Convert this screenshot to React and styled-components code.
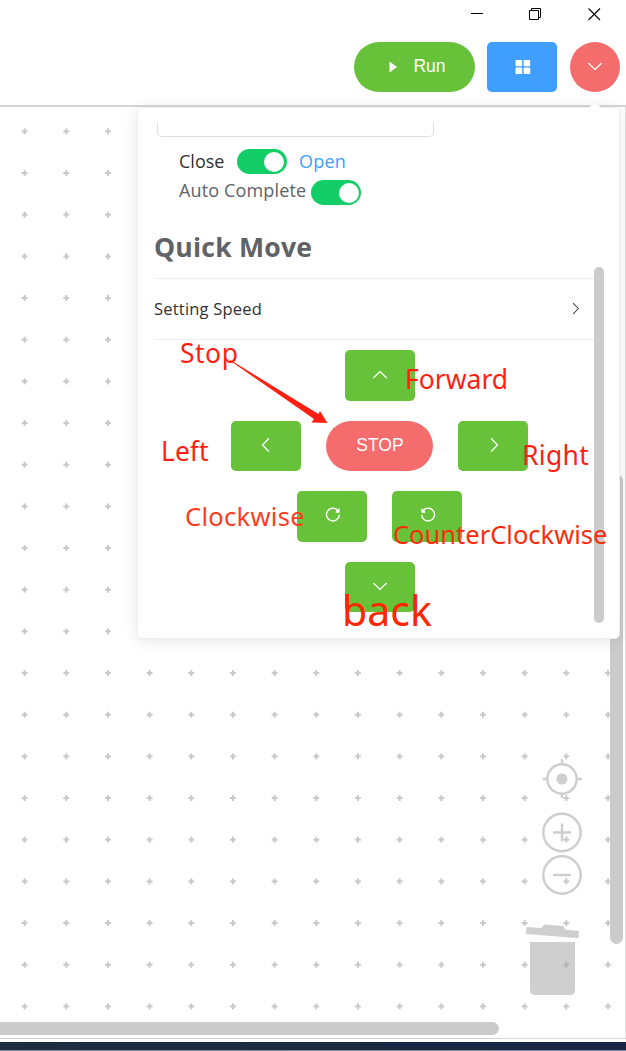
import React from "react";
import styled, { createGlobalStyle } from "styled-components";

const GlobalStyle = createGlobalStyle`
  *, *::before, *::after { box-sizing: border-box; }
  body { margin: 0; background: #fff; overflow: hidden; }
  button { font: inherit; border: 0; padding: 0; margin: 0; }
`;

const humanist = `"Open Sans", "Noto Sans", sans-serif`;
const noteFace = `"Noto Sans", "Open Sans", sans-serif`;

const Window = styled.div`
  position: relative;
  width: 626px;
  height: 1051px;
  display: flex;
  flex-direction: column;
  overflow: hidden;
  background: #fff;
  font-family: ${humanist};
  color: #606266;
`;

const TitleBar = styled.div`
  height: 28px;
  flex: none;
  display: flex;
  justify-content: flex-end;
  align-items: center;
  gap: 44px;
  padding-right: 25px;
  svg { display: block; }
  svg:last-child { margin-left: 1px; }
`;

const Toolbar = styled.header`
  height: 79px;
  flex: none;
  display: flex;
  justify-content: flex-end;
  align-items: flex-start;
  gap: 12px;
  padding: 14px 6px 0 0;
  border-bottom: 2px solid #d6d6d6;
  & > :last-child { margin-left: 1px; }
`;

const colours = { green: "#67c23a", blue: "#409eff", red: "#f56c6c" };

const Button = styled.button`
  display: flex;
  align-items: center;
  justify-content: center;
  gap: ${(p) => p.$gap || 0}px;
  width: ${(p) => p.$w || 70}px;
  height: ${(p) => p.$h || 50}px;
  padding-left: ${(p) => p.$indent || 0}px;
  padding-bottom: ${(p) => p.$lift || 0}px;
  flex: none;
  border-radius: ${(p) => (p.$round ? 25 : 5)}px;
  background: ${(p) => colours[p.$tone || "green"]};
  color: #fff;
  font-family: "Liberation Sans", Arial, sans-serif;
  font-size: 17.5px;
  line-height: 1;
  svg { display: block; flex: none; }
`;

const Workspace = styled.main`
  position: relative;
  height: 932px;
  flex: none;
  border-bottom: 1px solid #d4d4d4;
  border-right: 1px solid #dedede;
`;

const DotGrid = styled.svg`
  display: block;
  width: 625px;
  height: 913px;
`;

const Controls = styled.div`
  position: absolute;
  left: 524px;
  top: 650px;
  display: flex;
  flex-direction: column;
  svg { display: block; }
`;

const HorizontalScroll = styled.div`
  width: 499px;
  height: 13px;
  margin-top: 2px;
  border-radius: 0 7px 7px 0;
  background: #cbcbcb;
`;

const VerticalScroll = styled.div`
  position: absolute;
  left: 610px;
  top: 367px;
  width: 13px;
  height: 470px;
  border-radius: 7px;
  background: #cbcbcb;
`;

const Taskbar = styled.footer`
  flex: none;
  margin-top: 3px;
  height: 9px;
  background: linear-gradient(90deg, #1d2e40, #192745);
  border-bottom: 1px solid #7c8798;
`;

const Popover = styled.section`
  position: absolute;
  left: 137px;
  top: 107px;
  width: 483px;
  height: 532px;
  padding: 15px 16px;
  background: #fff;
  border: 1px solid #ebeef5;
  border-radius: 5px;
  box-shadow: 0 2px 15px rgba(0, 0, 0, 0.1);
`;

const Caret = styled.svg`
  position: absolute;
  right: 17px;
  top: -7px;
`;

const PanelBody = styled.div`
  height: 100%;
  width: 440px;
  display: flex;
  flex-direction: column;
`;

const PanelScroll = styled.div`
  position: absolute;
  left: 456px;
  top: 159px;
  width: 10px;
  height: 356px;
  border-radius: 5px;
  background: #cbcbcb;
`;

const Field = styled.div`
  width: 277px;
  height: 14px;
  flex: none;
  margin-left: 3px;
  border: 1px solid #dcdfe6;
  border-top: 0;
  border-radius: 0 0 5px 5px;
`;

const SwitchRow = styled.div`
  display: flex;
  align-items: center;
  height: 25px;
  flex: none;
  margin: ${(p) => p.$top}px 0 0 25px;
`;

const Caption = styled.span`
  font-size: 18px;
  line-height: 25px;
  white-space: nowrap;
  width: ${(p) => p.$w}px;
  letter-spacing: ${(p) => p.$ls || 0}px;
  color: ${(p) => p.$color || "#606266"};
  margin-top: ${(p) => p.$shift || 0}px;
`;

const Switch = styled.span`
  width: 50px;
  height: 25px;
  flex: none;
  display: flex;
  align-items: center;
  justify-content: flex-end;
  padding-right: ${(p) => p.$inset || 2}px;
  border-radius: 13px;
  background: #13ce66;
  margin-right: 12px;
  &::after {
    content: "";
    width: 20px;
    height: 20px;
    border-radius: 50%;
    background: #fff;
  }
`;

const Heading = styled.h2`
  margin: 23px 0 0;
  height: 50px;
  flex: none;
  font-size: 26.6px;
  letter-spacing: 0.2px;
  line-height: 38px;
  font-weight: 700;
  color: #606266;
`;

const Collapse = styled.div`
  height: 62px;
  flex: none;
  display: flex;
  align-items: center;
  justify-content: space-between;
  padding: 0 12px 2px 0;
  border: solid #ebeef5;
  border-width: 1px 0;
  font-size: 16.5px;
  letter-spacing: 0.2px;
  color: #303133;
`;

const Pad = styled.div`
  margin: 10px 0 0 12px;
  display: flex;
  flex-direction: column;
  align-items: center;
  gap: 20px;
`;

const PadRow = styled.div`
  display: flex;
  gap: 25px;
  margin-right: 1px;
`;

const Note = styled.span`
  position: absolute;
  left: ${(p) => p.$x}px;
  top: ${(p) => p.$y}px;
  font-family: ${noteFace};
  font-size: ${(p) => p.$size || 26}px;
  letter-spacing: ${(p) => p.$ls || 0}px;
  line-height: 36px;
  white-space: nowrap;
  color: ${(p) => p.$color || "#ff1f12"};
`;

const NoteArrow = styled.svg`
  position: absolute;
  left: 224px;
  top: 354px;
`;

const chevrons = {
  up: "M1.3 11 8 4.5l6.7 6.5",
  down: "M1.3 5 8 11.5 14.7 5",
  left: "M11 1.3 4.5 8l6.5 6.7",
  right: "M5 1.3 11.5 8 5 14.7",
};

const Chevron = ({ dir, size = 16, color = "#fff" }) => (
  <svg width={size} height={size} viewBox="0 0 16 16" fill="none" stroke={color} strokeWidth="1.25">
    <path d={chevrons[dir]} />
  </svg>
);

const Rotate = ({ flip }) => (
  <svg width="16" height="16" viewBox="0 0 16 16" fill="none" stroke="#fff" strokeWidth="1.4">
    <g transform={flip ? "matrix(-1 0 0 1 16 0)" : undefined}>
      <path d="M12.4 3A6.4 6.4 0 1 0 14.3 7.8" />
      <path d="M14.6 1.2v4.6h-4.2l1-2.4z" fill="#fff" stroke="none" />
    </g>
  </svg>
);

const notes = [
  { text: "Stop", $x: 180, $y: 335, $size: 26.5, $ls: 0.5 },
  { text: "Forward", $x: 405, $y: 361, $size: 26.5 },
  { text: "Left", $x: 161, $y: 433, $size: 26.5 },
  { text: "Right", $x: 522, $y: 437, $size: 26.5, $ls: 0.3 },
  { text: "Clockwise", $x: 185, $y: 498, $color: "#ff3b20", $size: 25.5, $ls: 0.3 },
  { text: "CounterClockwise", $x: 393, $y: 516, $color: "#ff2a0a", $size: 25.5 },
  { text: "back", $x: 342, $y: 592, $color: "#ff2600", $size: 41 },
];

export default function App() {
  return (
    <Window>
      <GlobalStyle />
      <TitleBar>
        <svg width="14" height="14" stroke="#000"><path d="M1 6.5h12" /></svg>
        <svg width="14" height="14" fill="none" stroke="#000">
          <path d="M1.5 3.5h9v9h-9zM3.5 3.5v-2h9v9h-2" />
        </svg>
        <svg width="14" height="14" stroke="#000" strokeWidth="1.1"><path d="M1.5 1.5l11.5 11.5M13 1.5L1.5 13" /></svg>
      </TitleBar>
      <Toolbar>
        <Button $w={121} $round $gap={16} $indent={6}>
          <svg width="8" height="12"><path d="M0.5 0.5 8 6 0.5 11.5z" fill="#fff" /></svg>
          Run
        </Button>
        <Button $tone="blue" $lift={1} $indent={1}>
          <svg width="16" height="16" fill="#fff">
            <rect x="0.5" y="1" width="6.7" height="6.2" rx="0.8" />
            <rect x="8.6" y="1" width="6.6" height="6.2" rx="0.8" />
            <rect x="0.5" y="8.6" width="6.7" height="6.4" rx="0.8" />
            <rect x="8.6" y="8.6" width="6.6" height="6.4" rx="0.8" />
          </svg>
        </Button>
        <Button $tone="red" $w={50} $round $lift={2}><Chevron dir="down" /></Button>
      </Toolbar>
      <Workspace>
        <DotGrid>
          <defs>
            <pattern id="dots" x="3.8" y="3.5" width="41.67" height="41.67" patternUnits="userSpaceOnUse">
              <path d="M17.9 20.8h5.8M20.8 17.9v5.8" stroke="#c8c8c8" strokeWidth="2" />
            </pattern>
          </defs>
          <rect width="625" height="913" fill="url(#dots)" />
        </DotGrid>
        <HorizontalScroll />
        <VerticalScroll />
        <Controls>
          <svg width="60" height="142" fill="none" stroke="#cecece" strokeWidth="2.4">
            <circle cx="38" cy="22" r="14.7" />
            <circle cx="38" cy="22" r="5.5" fill="#cecece" stroke="none" />
            <path d="M38 2v5M38 36v5M18.5 22h5M53 22h5" />
            <circle cx="38" cy="75.5" r="18.7" />
            <path d="M29 75.5h18M38 66.5v18" />
            <circle cx="38" cy="118" r="18.7" />
            <path d="M29 118h18" />
          </svg>
          <svg width="60" height="100" fill="#a0a0a0" fillOpacity="0.5">
            <path d="M2.5 28 17 29l3.5-3.5L39 27l2.5 3.8 13.5 1-.5 7.5L2 35z" />
            <path d="M6 43h45v48.5a4.5 4.5 0 0 1-4.5 4.5h-36a4.5 4.5 0 0 1-4.5-4.5z" />
          </svg>
        </Controls>
      </Workspace>
      <Taskbar />

      <Popover>
        <Caret width="14" height="8" viewBox="0 0 14 8">
          <path d="M0 8 7 1l7 7z" fill="#fff" />
          <path d="M0 7.5 7 .7l7 6.8" fill="none" stroke="#ebeef5" />
        </Caret>
        <PanelBody>
          <Field />
          <SwitchRow $top={12}>
            <Caption $w={58} $color="#303133">Close</Caption>
            <Switch $inset={3} />
            <Caption $color="#409eff" $ls={0.2}>Open</Caption>
          </SwitchRow>
          <SwitchRow $top={6}>
            <Caption $w={132} $shift={-4} $ls={0.15}>Auto Complete</Caption>
            <Switch />
          </SwitchRow>
          <Heading>Quick Move</Heading>
          <Collapse>
            Setting Speed
            <Chevron dir="right" size={13} color="#404245" />
          </Collapse>
          <Pad>
            <Button $h={51} $lift={1}><Chevron dir="up" /></Button>
            <PadRow>
              <Button $lift={2}><Chevron dir="left" /></Button>
              <Button $tone="red" $w={107} $round $indent={1}>STOP</Button>
              <Button $lift={2} $indent={2}><Chevron dir="right" /></Button>
            </PadRow>
            <PadRow>
              <Button $h={51} $lift={3} $indent={2}><Rotate /></Button>
              <Button $h={51} $lift={3} $indent={2}><Rotate flip /></Button>
            </PadRow>
            <Button $lift={2}><Chevron dir="down" /></Button>
          </Pad>
        </PanelBody>
        <PanelScroll />
      </Popover>

      <NoteArrow width="105" height="72">
        <path d="M3 4.500 90 65l-2.500 3.500 16 .5L96 57l-1.500 3L8 7z" fill="#ff1f12" />
      </NoteArrow>
      {notes.map(({ text, ...place }) => (
        <Note key={text} {...place}>{text}</Note>
      ))}
    </Window>
  );
}
